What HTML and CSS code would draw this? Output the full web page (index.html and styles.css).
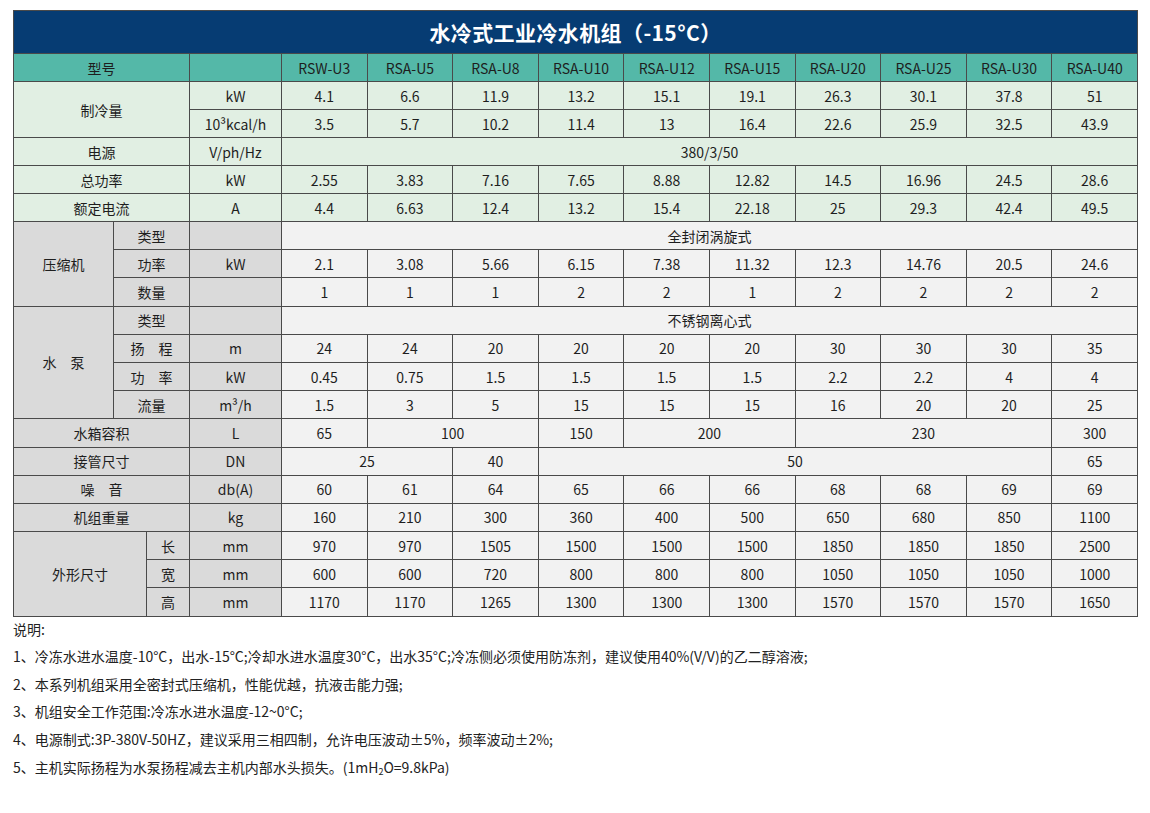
FILE: index.html
```html
<!DOCTYPE html>
<html lang="zh-CN">
<head>
<meta charset="utf-8">
<title>水冷式工业冷水机组（-15°C）</title>
<link rel="stylesheet" href="styles.css">
</head>
<body>
<div class="page">
<table class="spec">
  <colgroup>
    <col class="c-a"><col class="c-b"><col class="c-c"><col class="c-unit">
    <col class="c-d"><col class="c-d"><col class="c-d"><col class="c-d"><col class="c-d">
    <col class="c-d"><col class="c-d"><col class="c-d"><col class="c-d"><col class="c-d">
  </colgroup>
  <thead>
    <tr class="title"><th colspan="14">水冷式工业冷水机组（-15°C）</th></tr>
    <tr class="head">
      <th colspan="3">型号</th><th></th>
      <th>RSW-U3</th><th>RSA-U5</th><th>RSA-U8</th><th>RSA-U10</th><th>RSA-U12</th>
      <th>RSA-U15</th><th>RSA-U20</th><th>RSA-U25</th><th>RSA-U30</th><th>RSA-U40</th>
    </tr>
  </thead>
  <tbody class="green">
    <tr><td colspan="3" rowspan="2">制冷量</td><td>kW</td>
      <td>4.1</td><td>6.6</td><td>11.9</td><td>13.2</td><td>15.1</td><td>19.1</td><td>26.3</td><td>30.1</td><td>37.8</td><td>51</td></tr>
    <tr><td>10³kcal/h</td>
      <td>3.5</td><td>5.7</td><td>10.2</td><td>11.4</td><td>13</td><td>16.4</td><td>22.6</td><td>25.9</td><td>32.5</td><td>43.9</td></tr>
    <tr><td colspan="3">电源</td><td>V/ph/Hz</td><td colspan="10">380/3/50</td></tr>
    <tr><td colspan="3">总功率</td><td>kW</td>
      <td>2.55</td><td>3.83</td><td>7.16</td><td>7.65</td><td>8.88</td><td>12.82</td><td>14.5</td><td>16.96</td><td>24.5</td><td>28.6</td></tr>
    <tr><td colspan="3">额定电流</td><td>A</td>
      <td>4.4</td><td>6.63</td><td>12.4</td><td>13.2</td><td>15.4</td><td>22.18</td><td>25</td><td>29.3</td><td>42.4</td><td>49.5</td></tr>
  </tbody>
  <tbody class="grey">
    <tr><th rowspan="3">压缩机</th><th colspan="2">类型</th><th></th><td colspan="10">全封闭涡旋式</td></tr>
    <tr><th colspan="2">功率</th><th>kW</th>
      <td>2.1</td><td>3.08</td><td>5.66</td><td>6.15</td><td>7.38</td><td>11.32</td><td>12.3</td><td>14.76</td><td>20.5</td><td>24.6</td></tr>
    <tr><th colspan="2">数量</th><th></th>
      <td>1</td><td>1</td><td>1</td><td>2</td><td>2</td><td>1</td><td>2</td><td>2</td><td>2</td><td>2</td></tr>
    <tr><th rowspan="4">水&emsp;泵</th><th colspan="2">类型</th><th></th><td colspan="10">不锈钢离心式</td></tr>
    <tr><th colspan="2">扬&emsp;程</th><th>m</th>
      <td>24</td><td>24</td><td>20</td><td>20</td><td>20</td><td>20</td><td>30</td><td>30</td><td>30</td><td>35</td></tr>
    <tr><th colspan="2">功&emsp;率</th><th>kW</th>
      <td>0.45</td><td>0.75</td><td>1.5</td><td>1.5</td><td>1.5</td><td>1.5</td><td>2.2</td><td>2.2</td><td>4</td><td>4</td></tr>
    <tr><th colspan="2">流量</th><th>m³/h</th>
      <td>1.5</td><td>3</td><td>5</td><td>15</td><td>15</td><td>15</td><td>16</td><td>20</td><td>20</td><td>25</td></tr>
    <tr><th colspan="3">水箱容积</th><th>L</th>
      <td>65</td><td colspan="2">100</td><td>150</td><td colspan="2">200</td><td colspan="3">230</td><td>300</td></tr>
    <tr><th colspan="3">接管尺寸</th><th>DN</th>
      <td colspan="2">25</td><td>40</td><td colspan="6">50</td><td>65</td></tr>
    <tr><th colspan="3">噪&emsp;音</th><th>db(A)</th>
      <td>60</td><td>61</td><td>64</td><td>65</td><td>66</td><td>66</td><td>68</td><td>68</td><td>69</td><td>69</td></tr>
    <tr><th colspan="3">机组重量</th><th>kg</th>
      <td>160</td><td>210</td><td>300</td><td>360</td><td>400</td><td>500</td><td>650</td><td>680</td><td>850</td><td>1100</td></tr>
    <tr><th colspan="2" rowspan="3">外形尺寸</th><th>长</th><th>mm</th>
      <td>970</td><td>970</td><td>1505</td><td>1500</td><td>1500</td><td>1500</td><td>1850</td><td>1850</td><td>1850</td><td>2500</td></tr>
    <tr><th>宽</th><th>mm</th>
      <td>600</td><td>600</td><td>720</td><td>800</td><td>800</td><td>800</td><td>1050</td><td>1050</td><td>1050</td><td>1000</td></tr>
    <tr><th>高</th><th>mm</th>
      <td>1170</td><td>1170</td><td>1265</td><td>1300</td><td>1300</td><td>1300</td><td>1570</td><td>1570</td><td>1570</td><td>1650</td></tr>
  </tbody>
</table>
<div class="notes">
  <p>说明:</p>
  <p>1、冷冻水进水温度-10°C，出水-15°C;冷却水进水温度30°C，出水35°C;冷冻侧必须使用防冻剂，建议使用40%(V/V)的乙二醇溶液;</p>
  <p>2、本系列机组采用全密封式压缩机，性能优越，抗液击能力强;</p>
  <p>3、机组安全工作范围:冷冻水进水温度-12~0°C;</p>
  <p>4、电源制式:3P-380V-50HZ，建议采用三相四制，允许电压波动±5%，频率波动±2%;</p>
  <p>5、主机实际扬程为水泵扬程减去主机内部水头损失。(1mH<sub class="sub">2</sub>O=9.8kPa)</p>
</div>
</div>
</body>
</html>
```

FILE: styles.css
```css
html, body {
  margin: 0;
  padding: 0;
  background: #ffffff;
}

body {
  font-family: "Noto Sans CJK SC", "Noto Sans", sans-serif;
  color: #222222;
  font-size: 14px;
}

.page {
  padding: 10px 13px 0 13px;
}

.spec {
  width: 1124px;
  table-layout: fixed;
  border-collapse: collapse;
}

.c-a { width: 100px; }
.c-b { width: 33px; }
.c-c { width: 43px; }
.c-unit { width: 92px; }
.c-d { width: 85.6px; }

.spec th,
.spec td {
  border: 1px solid #4a4a4a;
  padding: 0;
  height: 27px;
  text-align: center;
  vertical-align: middle;
  font-weight: normal;
  font-size: 14px;
  line-height: 18px;
  white-space: nowrap;
  color: #1e1e1e;
}

.title th {
  background: #063c73;
  color: #ffffff;
  font-size: 21px;
  font-weight: bold;
  height: 42px;
  line-height: 26px;
  letter-spacing: 0.4px;
}

.head th {
  background: #54b8a8;
}

.green td {
  background: #e1efe3;
}

.grey th,
.grey td {
  height: 27.2px;
}

.grey th {
  background: #dadada;
}

.grey td {
  background: #f2f2f2;
}

.notes {
  margin-top: -1px;
}

.notes p {
  margin: 0;
  font-size: 14px;
  line-height: 27.6px;
  color: #222222;
}

.sub {
  font-size: 9px;
  line-height: 0;
  vertical-align: -2px;
}
```
